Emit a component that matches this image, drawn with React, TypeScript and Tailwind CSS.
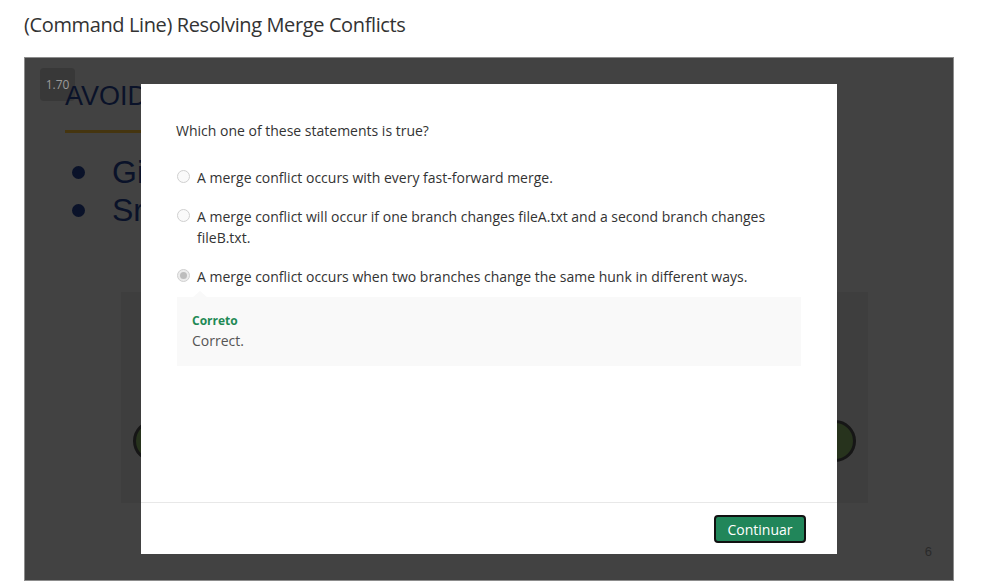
import React from 'react';

const options = [
  'A merge conflict occurs with every fast-forward merge.',
  'A merge conflict will occur if one branch changes fileA.txt and a second branch changes fileB.txt.',
  'A merge conflict occurs when two branches change the same hunk in different ways.',
];

const Radio: React.FC<{ checked?: boolean }> = ({ checked }) => (
  <span
    className={`mt-[3px] flex h-[13px] w-[13px] shrink-0 items-center justify-center rounded-full border border-[#d0d0d0] ${
      checked ? 'bg-[#ececec]' : 'bg-[#fafafa]'
    }`}
  >
    {checked && <span className="h-[7px] w-[7px] rounded-full bg-[#bdbdbd]" />}
  </span>
);

export default function App() {
  return (
    <div className="min-h-[585px] bg-white px-6 pt-[10px]" style={{ fontFamily: '"Open Sans", sans-serif' }}>
      <h1 className="text-[20px] leading-[30px] text-[#333] tracking-[-0.38px]">(Command Line) Resolving Merge Conflicts</h1>

      <div className="relative mt-[17px] h-[524px] w-[930px] overflow-hidden border border-[#8c8c8c] bg-[#424242]">
        {/* playback speed badge */}
        <div className="absolute left-[15px] top-[10px] flex h-[33px] w-[35px] items-center justify-center rounded-[4px] bg-[#383838] text-[12px] text-[#9b9b9b]">
          1.70
        </div>

        {/* dimmed slide underneath */}
        <div className="flex h-full flex-col pl-[40px] pt-[18px]" style={{ fontFamily: '"Liberation Sans", Arial, sans-serif' }}>
          <div className="relative text-[27px] leading-[40px] text-[#0a1229]">AVOID</div>
          <div className="mt-[14px] h-[3px] w-[80px] bg-[#45350f]" />
          <ul className="mt-[20px] flex flex-col pl-[7px] text-[32px] leading-[38px] text-[#0a1229]">
            <li className="flex items-center gap-[27px]">
              <span className="h-[13px] w-[13px] rounded-full bg-[#0a1229]" />
              <span>Gi</span>
            </li>
            <li className="flex items-center gap-[27px]">
              <span className="h-[13px] w-[13px] rounded-full bg-[#0a1229]" />
              <span>Sr</span>
            </li>
          </ul>
          <div className="ml-[56px] mt-[63px] flex h-[211px] w-[747px] items-center justify-between bg-[#3e3e3e] px-[12px]">
            <span className="mt-[86px] h-[42px] w-[42px] rounded-full border-[3px] border-[#161616] bg-[#27331d]" />
            <span className="mt-[86px] h-[42px] w-[42px] rounded-full border-[3px] border-[#161616] bg-[#27331d]" />
          </div>
        </div>

        {/* slide number */}
        <div className="absolute bottom-[19px] right-[21px] text-[13px] text-[#2a2a2a]" style={{ fontFamily: '"Liberation Sans", Arial, sans-serif' }}>
          6
        </div>

        {/* quiz dialog */}
        <div className="absolute left-[116px] top-[26px] flex h-[470px] w-[696px] flex-col bg-white">
          <div className="flex-1 pl-[35px] pr-[35px] pt-[36px]">
            <p className="text-[14px] leading-[21px] text-[#333]">Which one of these statements is true?</p>
            <div className="mt-[26px] flex flex-col gap-[18px]">
              {options.map((o, i) => (
                <label key={i} className="flex items-start gap-[7px] pl-[1px] text-[14px] leading-[21px] text-[#333]">
                  <Radio checked={i === 2} />
                  <span className="pr-[20px]">{o}</span>
                </label>
              ))}
            </div>
            <div className="relative ml-[1px] mt-[10px] w-[624px] bg-[#f9f9f9] px-[15px] pb-[14px] pt-[15px]">
              <span className="absolute -top-[6px] left-[16px] h-0 w-0 border-x-[7px] border-b-[6px] border-x-transparent border-b-[#f9f9f9]" />
              <div className="text-[12px] font-bold leading-[18px] text-[#1f8a55]">Correto</div>
              <div className="text-[14px] leading-[22px] text-[#555]">Correct.</div>
            </div>
          </div>
          <div className="flex h-[52px] items-start justify-end border-t border-[#e8e8e8] pr-[31px] pt-[12px]">
            <button className="h-[28px] w-[92px] rounded-[4px] border-2 border-[#111] bg-[#21865a] text-[14px] text-white">
              Continuar
            </button>
          </div>
        </div>
      </div>
    </div>
  );
}
